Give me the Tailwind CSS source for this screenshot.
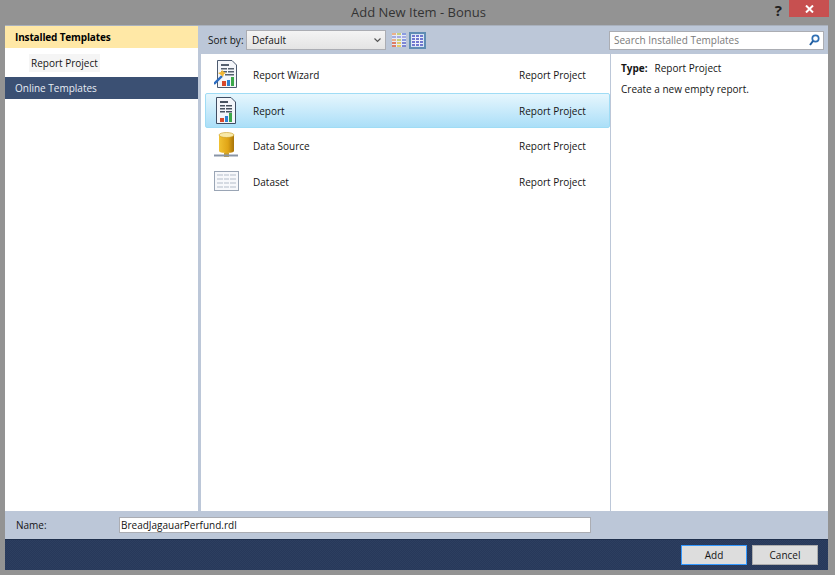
<!DOCTYPE html>
<html lang="en">
<head>
    <meta charset="UTF-8">
    <title>Add New Item - Bonus</title>
    <script src="https://cdn.jsdelivr.net/npm/@tailwindcss/browser@4"></script>
</head>
<body class="w-[835px] h-[575px] overflow-hidden bg-[#939393] font-['Open_Sans','Noto_Sans',sans-serif] text-[10px] text-[#151515]">
    <div class="flex flex-col h-full pl-[5px] pr-[7px] pb-[5px]">
        <!-- Title bar -->
        <header class="relative flex items-start justify-center h-[25px] shrink-0">
            <h1 class="mt-[3px] ml-[4px] text-[13px] leading-[18px] text-[#333]">Add New Item - Bonus</h1>
            <span class="absolute right-[46px] top-[1px] text-[15px] leading-[18px] font-bold text-[#222]">?</span>
            <button class="absolute right-[-1px] top-0 flex items-center justify-center w-[40px] h-[17px] bg-[#c75050]">
                <svg width="9" height="8" viewBox="0 0 9 8"><path d="M1 0.5 L8 7.5 M8 0.5 L1 7.5" stroke="#fff" stroke-width="2"/></svg>
            </button>
        </header>

        <div class="flex flex-col flex-1 min-h-0 border-t border-[#a9b1bd] bg-[#bcc7d8]">
            <div class="flex flex-1 min-h-0">
                <!-- Left tree -->
                <aside class="w-[193px] shrink-0 bg-white">
                    <div class="flex items-center h-[22px] pl-[10px] bg-[#ffe8a6] font-bold tracking-[-0.15px] text-black">Installed Templates</div>
                    <div class="flex items-center h-[29px] pl-[24px]">
                        <span class="flex items-center h-[18px] px-[2px] pt-[1px] bg-[#f5f5f5]">Report Project</span>
                    </div>
                    <div class="flex items-center h-[22px] pl-[10px] pt-[1px] bg-[#3b5073] text-[#e8edf5]">Online Templates</div>
                </aside>

                <div class="flex flex-col flex-1 min-w-0 pl-[3px]">
                    <!-- Toolbar -->
                    <div class="flex items-center h-[28px] shrink-0 pr-[4px]">
                        <span class="ml-[7px] w-[38px] pt-[1px] shrink-0 whitespace-nowrap">Sort by:</span>
                        <div class="flex items-center justify-between w-[140px] h-[20px] pl-[5px] pr-[4px] pt-[1px] border border-[#abadb3] bg-gradient-to-b from-[#f4f4f4] to-[#e4e4e4]">
                            <span>Default</span>
                            <svg width="7" height="5" viewBox="0 0 7 5"><path d="M0.5 0.5 L3.5 3.5 L6.5 0.5" fill="none" stroke="#555" stroke-width="1.2"/></svg>
                        </div>
                        <!-- view toggles -->
                        <svg width="14" height="14" viewBox="0 0 14 14" class="ml-[6px]">
                            <rect width="14" height="14" fill="#e6ebf6"/>
                            <path d="M0 0h4v2H0zM0 6h4v2H0z" fill="#e9b08a"/><path d="M5 0h4v2H5zM5 6h4v2H5z" fill="#c5d07c"/><path d="M10 0h4v2h-4zM10 6h4v2h-4z" fill="#8a9be0"/>
                            <path d="M0 3h4v2H0zM5 3h4v2H5zM10 3h4v2h-4z" fill="#a4abe2"/>
                            <path d="M0 9h4v2H0zM0 12h4v2H0z" fill="#dd7d66"/><path d="M5 9h4v2H5zM5 12h4v2H5z" fill="#e3cc6c"/><path d="M10 9h4v2h-4zM10 12h4v2h-4z" fill="#7d86d2"/>
                        </svg>
                        <div class="ml-[3px] w-[17px] h-[17px] p-[1px] border-2 border-[#5f8cb4] bg-[#d5e3f3]">
                            <svg width="11" height="11" viewBox="0 0 11 11" class="block">
                                <rect width="11" height="11" fill="#eef1fa"/>
                                <path d="M0 0h3v2H0zM4 0h3v2H4zM8 0h3v2H8zM0 3h3v2H0zM4 3h3v2H4zM8 3h3v2H8zM0 6h3v2H0zM4 6h3v2H4zM8 6h3v2H8zM0 9h3v2H0zM4 9h3v2H4zM8 9h3v2H8z" fill="#7078cf"/>
                            </svg>
                        </div>
                        <div class="ml-auto flex items-center justify-between w-[215px] h-[19px] pl-[4px] pr-[3px] border border-[#abadb3] bg-white">
                            <span class="text-[#7a7a7a]">Search Installed Templates</span>
                            <svg width="11" height="12" viewBox="0 0 11 12"><circle cx="6.5" cy="4.5" r="3.2" fill="none" stroke="#2f6fb3" stroke-width="1.7"/><path d="M4 7 L1 11" stroke="#1f5c9e" stroke-width="2"/></svg>
                        </div>
                    </div>

                    <div class="flex flex-1 min-h-0 bg-white">
                        <!-- Item list -->
                        <div class="w-[410px] shrink-0 pt-[3px] pl-[4px] border-r border-[#bcc7d8]">
                            <div class="flex items-center h-[36px] pl-[9px]">
                                <svg width="26" height="28" viewBox="0 0 26 28" class="shrink-0 -mt-[2px]">
                                    <path d="M3.5 0.5H18L22.5 5V27.5H3.5Z" fill="#f4f6fa" stroke="#4d5b70"/>
                                    <path d="M7 4h8v2H7z" fill="#55606f"/>
                                    <path d="M7 8h6v1.5H7zM14 8h6v1.5h-6zM7 11h6v1.5H7zM14 11h6v1.5h-6zM11 14h9v1.5h-9z" fill="#55606f"/>
                                    <rect x="8" y="21" width="4" height="5" fill="#d8492c"/><rect x="13" y="20" width="3" height="6" fill="#2f80d0"/><rect x="17" y="17" width="3" height="9" fill="#3ba84a"/>
                                    <path d="M0 24 L8 16" stroke="#2c6cc0" stroke-width="2.4"/><path d="M4 13l3-1 1-2 2 2 2 1-2 1-1 3-2-2z" fill="#f2b632"/>
                                </svg>
                                <span class="ml-[13px] w-[266px]">Report Wizard</span>
                                <span>Report Project</span>
                            </div>
                            <div class="flex items-center h-[35px] pl-[8px] pt-[1px] border border-[#9fdcf5] rounded-[2px] bg-gradient-to-b from-[#e6f6fd] to-[#abdff8]">
                                <svg width="26" height="27" viewBox="0 0 26 27" class="shrink-0 -mt-[1px]">
                                    <path d="M2.5 0.5H17L21.5 5V26.5H2.5Z" fill="#f4f6fa" stroke="#3f4d63"/>
                                    <path d="M6 4h8v2H6z" fill="#48525f"/>
                                    <path d="M6 8h5v1.5H6zM12 8h6v1.5h-6zM6 11h5v1.5H6zM12 11h6v1.5h-6zM6 14h5v1.5H6zM12 14h6v1.5h-6z" fill="#48525f"/>
                                    <rect x="6" y="21" width="4" height="4" fill="#d8492c"/><rect x="11" y="19" width="3" height="6" fill="#2f80d0"/><rect x="15" y="16" width="3" height="9" fill="#3ba84a"/>
                                </svg>
                                <span class="ml-[13px] w-[266px]">Report</span>
                                <span>Report Project</span>
                            </div>
                            <div class="flex items-center h-[36px] pl-[9px]">
                                <svg width="26" height="26" viewBox="0 0 26 26" class="shrink-0 -mt-[2px]">
                                    <defs><linearGradient id="dbGold" x1="0" x2="1" y1="0" y2="0"><stop offset="0" stop-color="#f1c232"/><stop offset="0.6" stop-color="#e0a416"/><stop offset="1" stop-color="#a87408"/></linearGradient></defs>
                                    <path d="M5 3v16c0 2.6 15 2.6 15 0V3Z" fill="url(#dbGold)"/>
                                    <ellipse cx="12.5" cy="3" rx="7.5" ry="2.5" fill="#f8e9a8" stroke="#c99a1c" stroke-width="0.6"/>
                                    <rect x="10" y="21" width="5" height="4" fill="#c9a030"/>
                                    <path d="M0 23.5h24" stroke="#8894a6" stroke-width="2"/>
                                </svg>
                                <span class="ml-[13px] w-[266px]">Data Source</span>
                                <span>Report Project</span>
                            </div>
                            <div class="flex items-center h-[36px] pl-[9px]">
                                <svg width="26" height="20" viewBox="0 0 26 20" class="shrink-0 -mt-[2px]">
                                    <rect x="0.5" y="0.5" width="24" height="19" fill="#f7f8fb" stroke="#9aa5b5"/>
                                    <path d="M3 3h6v2H3zM10 3h5v2h-5zM16 3h6v2h-6zM3 7h6v2H3zM10 7h5v2h-5zM16 7h6v2h-6zM3 11h6v2H3zM10 11h5v2h-5zM16 11h6v2h-6zM3 15h6v2H3zM10 15h5v2h-5zM16 15h6v2h-6z" fill="#d5dae2"/>
                                </svg>
                                <span class="ml-[13px] w-[266px]">Dataset</span>
                                <span>Report Project</span>
                            </div>
                        </div>
                        <!-- Details -->
                        <div class="flex-1 pt-[6px] pl-[10px]">
                            <p class="leading-[16px]"><span class="font-bold mr-[7px]">Type:</span>Report Project</p>
                            <p class="mt-[5px] leading-[16px]">Create a new empty report.</p>
                        </div>
                    </div>
                </div>
            </div>

            <!-- Name row -->
            <div class="flex items-center h-[28px] shrink-0 pl-[11px]">
                <label class="w-[103px]">Name:</label>
                <div class="flex items-center w-[472px] h-[16px] pl-[1px] border border-[#abadb3] bg-white">BreadJagauarPerfund.rdl</div>
            </div>

            <!-- Buttons -->
            <div class="flex items-center justify-end gap-[5px] h-[31px] shrink-0 pr-[10px] border-t border-[#1f2f4c] bg-[repeating-conic-gradient(#2d3f60_0_25%,#27385a_0_50%)] bg-[length:2px_2px]">
                <button class="w-[66px] h-[20px] border border-[#3399ff] bg-[#dddddd]">Add</button>
                <button class="w-[66px] h-[20px] border border-[#adadad] bg-[#dddddd]">Cancel</button>
            </div>
        </div>
    </div>
</body>
</html>
